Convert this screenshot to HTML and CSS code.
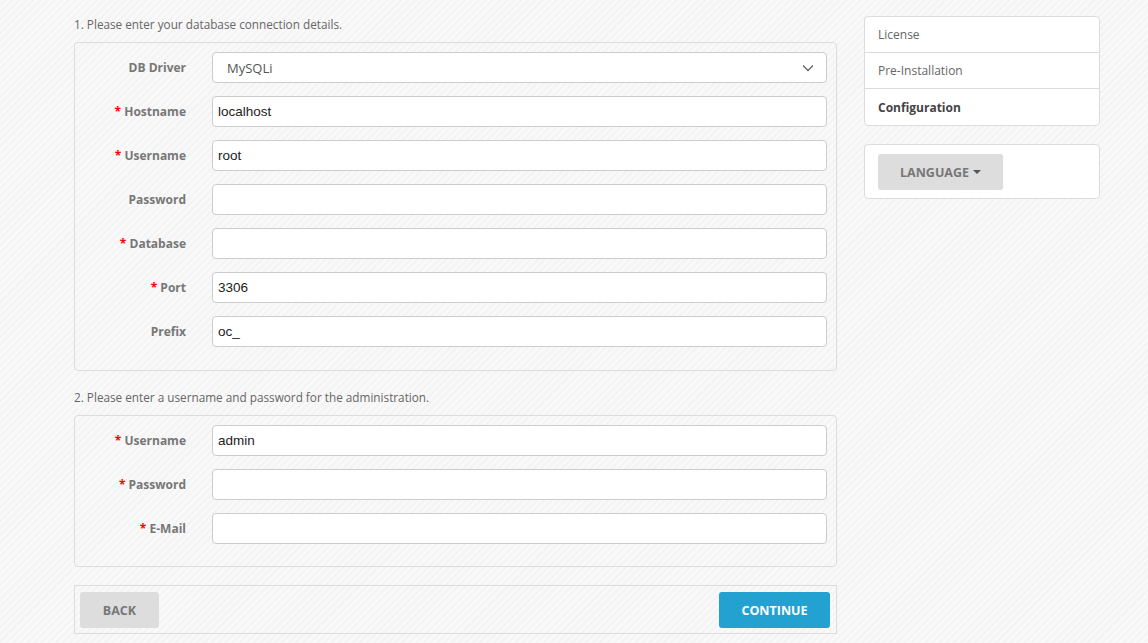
FILE: index.html
```html
<!DOCTYPE html>
<html>
<head>
<meta charset="utf-8">
<link rel="stylesheet" href="styles.css">
</head>
<body>
<div class="page">
  <div class="main">
    <p class="intro">1. Please enter your database connection details.</p>
    <div class="panel panel-db">
      <div class="row">
        <label class="lbl">DB Driver</label>
        <div class="field select">
          <span class="sel-text">MySQLi</span>
          <svg class="chev" width="12" height="8" viewBox="0 0 12 8"><path d="M1 1.5 L6 6.5 L11 1.5" fill="none" stroke="#666" stroke-width="1.3"/></svg>
        </div>
      </div>
      <div class="row">
        <label class="lbl"><span class="req">*</span> Hostname</label>
        <div class="field">localhost</div>
      </div>
      <div class="row">
        <label class="lbl"><span class="req">*</span> Username</label>
        <div class="field">root</div>
      </div>
      <div class="row">
        <label class="lbl">Password</label>
        <div class="field"></div>
      </div>
      <div class="row">
        <label class="lbl"><span class="req">*</span> Database</label>
        <div class="field"></div>
      </div>
      <div class="row">
        <label class="lbl"><span class="req">*</span> Port</label>
        <div class="field">3306</div>
      </div>
      <div class="row">
        <label class="lbl">Prefix</label>
        <div class="field">oc_</div>
      </div>
    </div>

    <p class="intro intro2">2. Please enter a username and password for the administration.</p>
    <div class="panel panel-admin">
      <div class="row">
        <label class="lbl"><span class="req">*</span> Username</label>
        <div class="field">admin</div>
      </div>
      <div class="row">
        <label class="lbl"><span class="req">*</span> Password</label>
        <div class="field"></div>
      </div>
      <div class="row">
        <label class="lbl"><span class="req">*</span> E-Mail</label>
        <div class="field"></div>
      </div>
    </div>

    <div class="buttons">
      <span class="btn btn-back">BACK</span>
      <span class="btn btn-continue">CONTINUE</span>
    </div>
  </div>

  <div class="side">
    <ul class="steps">
      <li>License</li>
      <li>Pre-Installation</li>
      <li class="active">Configuration</li>
    </ul>
    <div class="langbox">
      <span class="btn btn-lang">LANGUAGE <span class="caret"></span></span>
    </div>
  </div>
</div>
</body>
</html>
```

FILE: styles.css
```css
html, body {
  margin: 0;
  padding: 0;
}
body {
  font-family: "Open Sans", "Liberation Sans", sans-serif;
  font-size: 12px;
  color: #666;
  background-color: #f7f7f7;
  background-image: repeating-linear-gradient(135deg, #f9f9f9 0px, #f9f9f9 2.5px, #f4f4f4 2.5px, #f4f4f4 5px);
  height: 643px;
  overflow: hidden;
}
.page {
  display: flex;
  gap: 27px;
  padding-left: 74px;
  align-items: flex-start;
}
.main {
  width: 763px;
}
.intro {
  margin: 0;
  padding-top: 15px;
  line-height: 18px;
  height: 27px;
  color: #666;
  font-size: 11.75px;
}
.intro2 {
  padding-top: 17px;
  height: 27px;
}
.panel {
  border: 1px solid #dcdcdc;
  border-radius: 4px;
  padding: 9px 9px 10px 0;
}
.panel-admin {
  padding-bottom: 9px;
}
.row {
  display: flex;
  align-items: center;
  margin-bottom: 13px;
  height: 31px;
}
.lbl {
  width: 111px;
  text-align: right;
  font-weight: bold;
  color: #777;
  padding-right: 26px;
  font-size: 12px;
}
.req {
  color: #f00;
}
.field {
  flex: 1;
  height: 29px;
  background: #fff;
  border: 1px solid #ccc;
  border-radius: 4px;
  font-family: "Liberation Sans", Arial, sans-serif;
  font-size: 13.5px;
  color: #222;
  display: flex;
  align-items: center;
  padding-left: 5px;
}
.select {
  justify-content: space-between;
  padding-left: 14px;
  padding-right: 12px;
}
.sel-text {
  font-family: "Open Sans", sans-serif;
  font-size: 13px;
  color: #555;
}
.buttons {
  margin-top: 18px;
  border: 1px solid #dcdcdc;
  padding: 6px 6px 5px 5px;
  display: flex;
  justify-content: space-between;
}
.btn {
  display: inline-flex;
  align-items: center;
  justify-content: center;
  height: 36px;
  border-radius: 3px;
  font-weight: bold;
  font-size: 12.5px;
}
.btn-back {
  width: 79px;
  background: #dddddd;
  color: #777;
}
.btn-continue {
  width: 111px;
  background: #23a1d1;
  color: #fff;
}
.side {
  width: 236px;
  padding-top: 16px;
}
.steps {
  list-style: none;
  margin: 0;
  padding: 0;
  background: #fff;
  border: 1px solid #dcdcdc;
  border-radius: 4px;
}
.steps li {
  height: 35px;
  line-height: 35px;
  padding-left: 13px;
  border-top: 1px solid #dcdcdc;
  color: #666;
}
.steps li:first-child {
  border-top: none;
}
.steps li.active {
  font-weight: bold;
  color: #444;
  height: 36px;
  line-height: 37px;
}
.langbox {
  margin-top: 18px;
  background: #fff;
  border: 1px solid #dcdcdc;
  border-radius: 4px;
  padding: 9px 13px 8px 13px;
}
.btn-lang {
  width: 125px;
  background: #dddddd;
  color: #777;
  gap: 4px;
}
.caret {
  display: inline-block;
  width: 0;
  height: 0;
  border-left: 4px solid transparent;
  border-right: 4px solid transparent;
  border-top: 4px solid #555;
}
```
